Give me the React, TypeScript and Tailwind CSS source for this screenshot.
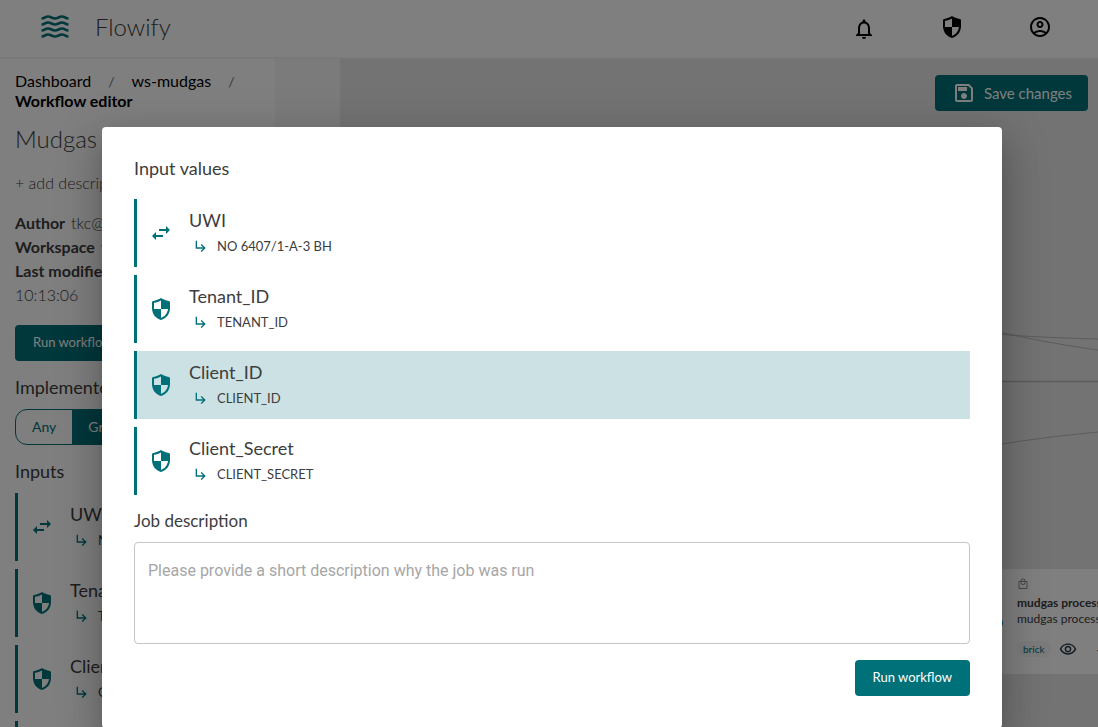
import React from 'react';
import {
  MdOutlineAccountCircle,
  MdOutlineNotifications,
  MdOutlineRemoveRedEye,
  MdOutlineSave,
  MdOutlineLocalMall,
  MdSubdirectoryArrowRight,
  MdSwapHoriz,
} from 'react-icons/md';

type Value = { name: string; value: string; secret: boolean };

const values: Value[] = [
  { name: 'UWI', value: 'NO 6407/1-A-3 BH', secret: false },
  { name: 'Tenant_ID', value: 'TENANT_ID', secret: true },
  { name: 'Client_ID', value: 'CLIENT_ID', secret: true },
  { name: 'Client_Secret', value: 'CLIENT_SECRET', secret: true },
];

function Shield() {
  return (
    <svg viewBox="0 0 24 24" className="size-6" fill="currentColor" aria-hidden="true">
      <path
        fillRule="evenodd"
        d="M12 1C9.800 2.600 7 3.400 4.200 3.900C3.400 4 3 4.500 3 5.200V11c0 5.800 3.600 10.600 9 12 5.400-1.400 9-6.200 9-12V5.200c0-.7-.4-1.200-1.200-1.300C17 3.400 14.200 2.600 12 1zm0 11h7c-.5 4.100-3.300 7.700-7 8.900V12H5V5.800c2.700-.5 5-1.200 7-2.400V12z"
      />
    </svg>
  );
}

function Waves() {
  return (
    <svg viewBox="0 0 28 24" className="h-6 w-7" fill="none" stroke="#007079" strokeWidth="2.600" aria-hidden="true">
      {[2.5, 8.5, 14.5, 20.5].map((y) => (
        <path
          key={y}
          d={`M.5 ${y + 1}C4 ${y + 1} 4 ${y - 1} 7 ${y - 1}S11 ${y + 1} 14 ${y + 1}S18 ${y - 1} 21 ${y - 1}S24 ${y + 1} 27.500 ${y + 1}`}
        />
      ))}
    </svg>
  );
}

function ValueRow({ item }: { item: Value }) {
  return (
    <li>
      <button
        type="button"
        className={
          'flex h-[68px] w-full items-center border-l-3 border-[#007079] pl-3 text-left ' +
          (item.name === 'Client_ID' ? 'in-[dialog]:bg-[#cce1e3]' : '')
        }
      >
        <span className="mr-4 shrink-0 text-[#007079]">
          {item.secret ? <Shield /> : <MdSwapHoriz className="size-6" />}
        </span>
        <span className="flex flex-col">
          <span className="text-lg leading-[26px]">{item.name}</span>
          <span className="flex items-center text-[13px] leading-[26px]">
            <MdSubdirectoryArrowRight className="mr-2 ml-1 size-4 shrink-0 text-[#007079]" />
            <span className="whitespace-nowrap">{item.value}</span>
          </span>
        </span>
      </button>
    </li>
  );
}

function Header() {
  return (
    <header className="flex h-[59px] shrink-0 items-center justify-between border-b-2 border-[#f2f2f2] bg-white pr-[46px] pb-1 pl-[41px]">
      <a href="#home" className="flex items-center gap-[26px]">
        <Waves />
        <span className="text-2xl leading-6 font-light">Flowify</span>
      </a>
      <nav className="flex items-center gap-16 text-black">
        <button type="button" aria-label="Notifications" className="pt-1">
          <MdOutlineNotifications className="size-6" />
        </button>
        <button type="button" aria-label="Secrets">
          <Shield />
        </button>
        <button type="button" aria-label="Account">
          <MdOutlineAccountCircle className="size-6" />
        </button>
      </nav>
    </header>
  );
}

function Sidebar() {
  return (
    <aside className="w-[275px] shrink-0 overflow-hidden bg-white px-[15px] pt-3">
      <nav className="text-base leading-5 text-black">
        <a href="#dashboard">Dashboard</a>
        <span className="mx-[17px] text-sm leading-4 text-[#6f6f6f]">/</span>
        <a href="#ws">ws-mudgas</a>
        <span className="mx-[17px] text-sm leading-4 text-[#6f6f6f]">/</span>
        <div className="font-bold">Workflow editor</div>
      </nav>
      <h1 className="mt-3 text-2xl leading-8 font-light whitespace-nowrap">Mudgas processing</h1>
      <button type="button" className="mt-4 block text-base leading-6 font-light">
        + add description
      </button>
      <dl className="mt-4 text-base leading-6">
        <div className="flex gap-[6px]">
          <dt className="font-bold">Author</dt>
          <dd className="font-light">tkc@equinor.com</dd>
        </div>
        <div className="flex gap-[6px]">
          <dt className="font-bold">Workspace</dt>
          <dd className="font-light">ws-mudgas</dd>
        </div>
        <div className="flex flex-wrap gap-x-[6px]">
          <dt className="font-bold">Last modified</dt>
          <dd className="font-light">12 October 2022,</dd>
          <dd className="font-light">10:13:06</dd>
        </div>
      </dl>
      <button type="button" className="mt-[18px] block h-9 rounded bg-[#007079] px-[18px] text-[13px] text-white">
        Run workflow
      </button>
      <h2 className="mt-[14px] text-lg leading-6 whitespace-nowrap">Implementer</h2>
      <div className="mt-[10px] flex h-9 w-fit overflow-hidden rounded-xl border border-[#007079] text-sm text-[#007079]">
        <button type="button" className="px-4">Any</button>
        <button type="button" className="bg-[#007079] px-4 text-white">Graph</button>
      </div>
      <h2 className="mt-[14px] text-lg leading-6">Inputs</h2>
      <ul className="mt-[10px] flex flex-col gap-2">
        {values.map((v) => <ValueRow key={v.name} item={v} />)}
      </ul>
    </aside>
  );
}

function Canvas() {
  return (
    <main className="relative min-w-0 flex-1 overflow-hidden bg-[#e6e6e6]">
      <svg className="absolute top-0 right-0 h-full w-[758px]" fill="none" stroke="#b8b8b8" aria-hidden="true">
        <path d="M600 270C655 275 680 278 758 280" />
        <path d="M600 258C660 274 700 283 758 291" />
        <path d="M600 322.500H758" strokeWidth="1.500" />
        <path d="M600 396Q680 380 758 373" />
      </svg>
      <button
        type="button"
        className="absolute top-4 right-[10px] flex h-9 items-center gap-2 rounded bg-[#007079] pr-4 pl-[17px] text-[15px] text-white"
      >
        <MdOutlineSave className="size-6" />
        Save changes
      </button>
      <section className="absolute top-[510px] right-[-80px] h-[105px] w-[177px] rounded bg-white px-4 pt-[9px]">
        <span className="absolute top-[50px] -left-[6px] size-2 rounded-full bg-[#0084c4]" />
        <MdOutlineLocalMall className="size-3 text-[#8c8c8c]" />
        <h3 className="mt-[5px] text-xs leading-4 font-bold whitespace-nowrap">mudgas processor</h3>
        <p className="text-xs leading-4 whitespace-nowrap">mudgas processor</p>
        <div className="mt-[10px] flex items-center gap-2">
          <span className="rounded-full bg-[#f7f7f7] px-[6px] text-[10px] leading-4 text-[#007079]">brick</span>
          <button type="button" aria-label="View" className="text-[#243746]">
            <MdOutlineRemoveRedEye className="size-[18px]" />
          </button>
          <button type="button" aria-label="Add" className="ml-3 text-[#243746]">+</button>
        </div>
      </section>
    </main>
  );
}

function RunDialog() {
  return (
    <dialog
      open
      aria-labelledby="dialog-title"
      className="static m-0 w-full max-w-[900px] rounded bg-white p-8 text-[#3d3d3d] shadow-[0_11px_15px_-7px_rgba(0,0,0,0.2),0_24px_38px_3px_rgba(0,0,0,0.14),0_9px_46px_8px_rgba(0,0,0,0.12)]"
    >
      <h2 id="dialog-title" className="text-lg leading-[18px]">Input values</h2>
      <ul className="mt-[22px] flex flex-col gap-2">
        {values.map((v) => <ValueRow key={v.name} item={v} />)}
      </ul>
      <label htmlFor="job" className="mt-[14px] block text-[17px] leading-6">Job description</label>
      <textarea
        id="job"
        placeholder="Please provide a short description why the job was run"
        className="mt-[9px] block h-[102px] w-full resize-none rounded border border-[#c4c4c4] px-[13px] py-4 font-[Roboto,sans-serif] text-base leading-6 placeholder:text-[#a6a6a6]"
      />
      <div className="mt-4 flex justify-end">
        <button type="button" className="h-9 rounded bg-[#007079] px-[18px] text-[13px] text-white">Run workflow</button>
      </div>
    </dialog>
  );
}

export default function App() {
  return (
    <div className="relative flex h-screen flex-col overflow-hidden font-[Lato,sans-serif] text-[#3d3d3d]">
      <Header />
      <div className="flex min-h-0 flex-1">
        <Sidebar />
        <div className="w-[65px] shrink-0 bg-[#f7f7f7]" />
        <Canvas />
      </div>
      <div className="absolute inset-0 flex items-start justify-center overflow-hidden bg-black/50 pt-[127px] pl-[6px]">
        <RunDialog />
      </div>
    </div>
  );
}
